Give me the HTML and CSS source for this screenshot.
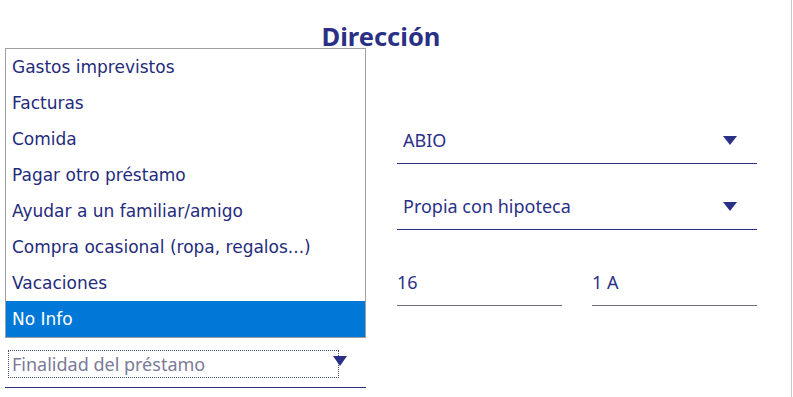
FILE: index.html
```html
<!DOCTYPE html>
<html lang="es">
<head>
<meta charset="utf-8">
<title>Dirección</title>
<link rel="stylesheet" href="styles.css">
</head>
<body>
<div class="page">
  <div class="form">
    <h2 class="title">Dirección</h2>
    <div class="grid">
      <div class="field select"></div>
      <div class="field select"><span class="value">ABIO</span><span class="caret"></span></div>

      <div class="field select r2"></div>
      <div class="field select r2"><span class="value">Propia con hipoteca</span><span class="caret"></span></div>

      <div class="field input r3"></div>
      <div class="pair r3">
        <div class="field input"><span class="value">16</span></div>
        <div class="field input"><span class="value">1 A</span></div>
      </div>

      <div class="field select r4">
        <span class="focus-box"><span class="placeholder">Finalidad del préstamo</span></span>
        <span class="caret small"></span>
      </div>
      <div class="r4"></div>
    </div>

    <ul class="listbox">
      <li>Gastos imprevistos</li>
      <li>Facturas</li>
      <li>Comida</li>
      <li>Pagar otro préstamo</li>
      <li>Ayudar a un familiar/amigo</li>
      <li>Compra ocasional (ropa, regalos...)</li>
      <li>Vacaciones</li>
      <li class="selected">No Info</li>
    </ul>
  </div>
</div>
</body>
</html>
```

FILE: styles.css
```css
* { box-sizing: border-box; }

html, body {
  margin: 0;
  padding: 0;
  background: #ffffff;
}

.page {
  position: relative;
  width: 792px;
  height: 397px;
  border-right: 1px solid #c9c9c9;
  overflow: hidden;
  font-family: "Noto Sans", "Open Sans", sans-serif;
  color: #2b3087;
}

.form {
  position: relative;
  width: 757px;
  padding-left: 5px;
}

.title {
  margin: 0;
  padding-top: 19px;
  height: 123px;
  text-align: center;
  font-size: 25.5px;
  line-height: 34px;
  font-weight: 700;
  color: #2b3087;
}

.grid {
  display: grid;
  grid-template-columns: 361px 360px;
  column-gap: 31px;
}

.field {
  position: relative;
  display: flex;
  align-items: center;
  height: 41px;
  padding-bottom: 6px;
  border-bottom: 1px solid #2b3087;
  font-size: 18px;
}

.field.input {
  border-bottom-color: #6c6c80;
}

.select .value {
  padding-left: 6px;
  flex: 1;
}

.caret {
  width: 0;
  height: 0;
  margin-right: 20px;
  border-left: 7px solid transparent;
  border-right: 7px solid transparent;
  border-top: 9px solid #2b3087;
}

.r2 { margin-top: 25px; }
.r3 { margin-top: 35px; }
.r4 { margin-top: 41px; }

.pair {
  display: grid;
  grid-template-columns: 165px 165px;
  column-gap: 30px;
}

.pair .field { margin-top: 0; }

.focus-box {
  position: absolute;
  left: 3px;
  top: 3px;
  width: 331px;
  height: 28px;
  border: 1px dotted #4a4f7a;
  display: flex;
  align-items: center;
  padding-left: 3px;
}

.placeholder {
  color: #7b7b98;
  font-size: 18px;
}

.caret.small {
  position: absolute;
  left: 328px;
  top: 9px;
  margin: 0;
  border-left-width: 7px;
  border-right-width: 7px;
  border-top-width: 10px;
}

.listbox {
  position: absolute;
  left: 5px;
  top: 48px;
  width: 361px;
  margin: 0;
  padding: 0;
  list-style: none;
  background: #ffffff;
  border: 1px solid #a0a0a0;
  font-family: "DejaVu Sans", Verdana, sans-serif;
  font-size: 17px;
  color: #252b7c;
}

.listbox li {
  height: 36px;
  line-height: 36px;
  padding-left: 6px;
  white-space: nowrap;
}

.listbox li.selected {
  background: #0078d7;
  color: #ffffff;
}
```
